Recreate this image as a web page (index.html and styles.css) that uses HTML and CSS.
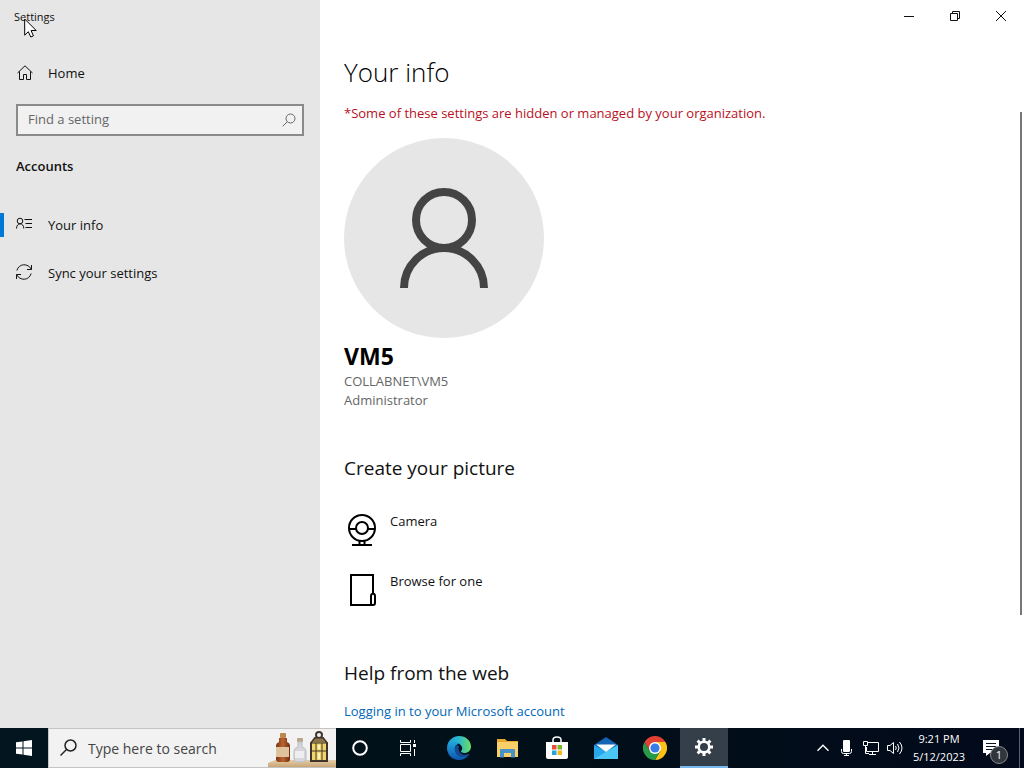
FILE: index.html
```html
<!DOCTYPE html>
<html lang="en">
<head>
	<title>Settings</title>
	<meta charset="utf-8">
	<meta name="viewport" content="width=device-width, initial-scale=1.0">
	<link rel="stylesheet" href="styles.css">
</head>
<body>

<div class="window">
	<aside class="sidebar">
		<div class="app-title">Settings</div>
		<a class="nav-item home" href="#home">
			<svg width="18" height="18" viewBox="0 0 18 18"><path d="M1.500 9 9 1.800 16.500 9M3.500 7.500V15.500H7.500V10.500H10.500V15.500H14.500V7.500"/></svg>
			Home
		</a>
		<label class="find">
			<input type="text" placeholder="Find a setting" aria-label="Find a setting">
			<svg width="14" height="14" viewBox="0 0 14 14"><circle cx="8.500" cy="5.500" r="4.500"/><path d="M5.200 8.800.7 13.300"/></svg>
		</label>
		<h2 class="group">Accounts</h2>
		<nav class="menu">
			<a class="nav-item active" href="#info">
				<svg width="18" height="18" viewBox="0 0 18 18"><circle cx="4" cy="5" r="2.800"/><path d="M.5 12.500C.5 6.300 7.800 6.300 7.800 12.500M8.500 3.500H16M9.500 7.500H16M9.500 11.500H16"/></svg>
				Your info
			</a>
			<a class="nav-item" href="#sync">
				<svg width="18" height="18" viewBox="0 0 18 18"><path d="M.8 6.500C3-.8 12-1 15.300 5.200M15.500 1V5.500H11M15.200 9.500C13 16.800 4 17 .7 10.800M.5 15V10.500H5"/></svg>
				Sync your settings
			</a>
		</nav>
	</aside>

	<main class="main">
		<div class="controls">
			<button type="button" aria-label="Minimize"><svg width="10" height="10" viewBox="0 0 10 10"><path d="M0 5.500H10"/></svg></button>
			<button type="button" aria-label="Restore"><svg width="10" height="10" viewBox="0 0 10 10"><path d="M.5 2.500H7.500V9.500H.5ZM2.500 2.500V.5H9.500V7.500H7.500"/></svg></button>
			<button type="button" aria-label="Close"><svg width="10" height="10" viewBox="0 0 10 10"><path d="M0 0 10 10M10 0 0 10"/></svg></button>
		</div>
		<div class="content">
			<h1>Your info</h1>
			<p class="warning">*Some of these settings are hidden or managed by your organization.</p>
			<svg class="avatar" width="200" height="200" viewBox="0 0 200 200">
				<circle cx="100" cy="100" r="100" fill="#e6e6e6"/>
				<g fill="none" stroke="#444" stroke-width="8"><circle cx="100" cy="82" r="28"/><path d="M60 150A40 40 0 0 1 140 150"/></g>
			</svg>
			<p class="name">VM5</p>
			<p class="detail">COLLABNET\VM5</p>
			<p class="detail">Administrator</p>

			<h2>Create your picture</h2>
			<div class="sources">
				<button type="button">
					<svg width="36" height="36" viewBox="0 0 36 36"><circle cx="18" cy="15" r="13"/><circle cx="18" cy="15" r="6"/><path d="M5 16H12M24 16H31M15.500 28V31M20.500 28V31M8 32H28"/></svg>
					Camera
				</button>
				<button type="button">
					<svg width="36" height="36" viewBox="0 0 36 36"><path d="M27 32H7V2H29V21M27 32V23Q27 21 29 20.500 31 21 31 23V30Q31 32 29 32H27"/></svg>
					Browse for one
				</button>
			</div>

			<h2>Help from the web</h2>
			<a class="help" href="#help">Logging in to your Microsoft account</a>
		</div>
		<div class="scrollbar"></div>
	</main>
</div>

<footer class="taskbar">
	<button class="task" type="button" aria-label="Start">
		<svg width="16" height="16" viewBox="0 0 16 16" fill="#fff"><path d="M0 2.300 6.500 1.400V7.500H0ZM7.500 1.200 16 0V7.500H7.500ZM0 8.500H6.500V14.600L0 13.700ZM7.500 8.500H16V16L7.500 14.800Z"/></svg>
	</button>
	<label class="search">
		<svg width="18" height="18" viewBox="0 0 18 18"><circle cx="10.500" cy="6.500" r="5.500"/><path d="M6.500 10.500.5 16.500"/></svg>
		<input type="text" placeholder="Type here to search" aria-label="Type here to search">
		<svg class="bottles" width="69" height="38" viewBox="0 0 69 38">
			<defs>
				<linearGradient id="amber"><stop offset="0" stop-color="#7b3517"/><stop offset=".5" stop-color="#b9652f"/><stop offset="1" stop-color="#6e2c12"/></linearGradient>
				<linearGradient id="shelf" x2="0" y2="1"><stop offset="0" stop-color="#e5cda8"/><stop offset="1" stop-color="#c9a576"/></linearGradient>
			</defs>
			<path d="M1 38V34L8 31H69V38Z" fill="url(#shelf)"/>
			<rect x="13" y="4" width="6" height="5" rx="1" fill="#bd8650"/>
			<path d="M12 9H20V13Q23 14 23 17V30Q23 33 20 33H12Q9 33 9 30V17Q9 14 12 13Z" fill="url(#amber)"/>
			<rect x="9" y="18" width="13" height="10" fill="#dfc39c"/>
			<rect x="30" y="9" width="6" height="4" rx="1" fill="#b8a58c"/>
			<path d="M31 13H35V18Q39 19 39 22V30Q39 33 36 33H30Q27 33 27 30V22Q27 19 31 18Z" fill="#d5d5da" stroke="#bcbcc3"/>
			<rect x="28" y="22" width="9" height="7" fill="#eeeef0"/>
			<circle cx="52" cy="6" r="3" fill="none" stroke="#42382f" stroke-width="2"/>
			<path d="M44 14 48 9H56L60 14V32H44Z" fill="#f2d66c" stroke="#40352b" stroke-width="2"/>
			<path d="M45 13.500 48.500 9.500H55.500L59 13.500Z" fill="#8d744b"/>
			<path d="M43 14H61M43 22H61M43 32H61M49 14V32M55 14V32" stroke="#40352b"/>
			<path d="M52 16V20M52 24V30" stroke="#fff6bd" stroke-width="2"/>
		</svg>
	</label>
	<button class="task" type="button" aria-label="Cortana">
		<svg width="18" height="18" viewBox="0 0 18 18"><circle cx="9" cy="9" r="6.800" fill="none" stroke="#fff" stroke-width="2"/></svg>
	</button>
	<button class="task" type="button" aria-label="Task View">
		<svg width="18" height="18" viewBox="0 0 18 18" fill="none" stroke="#fff"><path d="M1.500 1V3.500H11.500V1M1.500 5.500H11.500V12.500H1.500ZM1.500 17V14.500H11.500V17M15.500 1V4M15.500 10V17"/><path d="M14 5H17V8H14Z" fill="#fff" stroke="none"/></svg>
	</button>
	<div class="apps">
		<button class="task" type="button" aria-label="Edge">
			<svg width="24" height="24" viewBox="0 0 24 24">
				<defs>
					<linearGradient id="edge-top"><stop offset="0" stop-color="#209bdc"/><stop offset=".5" stop-color="#29b9cf"/><stop offset="1" stop-color="#70dd5e"/></linearGradient>
					<linearGradient id="edge-low" x2="0" y2="1"><stop offset="0" stop-color="#1fa4dc"/><stop offset="1" stop-color="#0c55ae"/></linearGradient>
				</defs>
				<path d="M0 11C1 4 6 0 12 0C19 0 24 5 24 10.500C24 14.500 21 17 17.500 17C15 17 13.800 16 14 15C15.200 14 15.500 12.500 15 11C13 6 4 5 0 11Z" fill="url(#edge-top)"/>
				<path d="M0 12C1 6 8 5 12 8C9 8 7.500 11 8 14C9 20 16 22 22.500 17.500C20 22 16 24 12 24C5 24 0 18.500 0 12Z" fill="url(#edge-low)"/>
				<path d="M9 9C6 14 9 22 17 21C20 20.500 21.500 19 22.500 17.500C17 21 10 17 12 10Z" fill="#134a91"/>
			</svg>
		</button>
		<button class="task" type="button" aria-label="File Explorer">
			<svg width="24" height="24" viewBox="0 0 24 24"><path d="M1 3H9L11 5H22V21H1Z" fill="#e6a92e"/><path d="M1 6H22V21H1Z" fill="#f8cf68"/><path d="M4 14Q4 13 5 13H18Q19 13 19 14V21.500H15V17H8V21.500H4Z" fill="#4792c6"/></svg>
		</button>
		<button class="task" type="button" aria-label="Microsoft Store">
			<svg width="24" height="24" viewBox="0 0 24 24"><path d="M8 7V4Q8 1 12 1T16 4V7" fill="none" stroke="#fff" stroke-width="1.500"/><path d="M1 6H23V21Q23 23 21 23H3Q1 23 1 21Z" fill="#fff"/><path d="M7 9H11.500V13.500H7Z" fill="#e94d35"/><path d="M12.500 9H17V13.500H12.500Z" fill="#75b928"/><path d="M7 14.500H11.500V19H7Z" fill="#25a3df"/><path d="M12.500 14.500H17V19H12.500Z" fill="#f8b719"/></svg>
		</button>
		<button class="task" type="button" aria-label="Mail">
			<svg width="24" height="24" viewBox="0 0 24 24"><path d="M0 9 12 1 24 9V15H0Z" fill="#1263b5"/><path d="M0 9 12 15.500 24 9V23H0Z" fill="#28a8ea"/><path d="M0 23 24 9V23Z" fill="#4bc7f5"/><path d="M2 8.500H22L12 16Z" fill="#f5fbff"/></svg>
		</button>
		<button class="task" type="button" aria-label="Chrome">
			<svg width="24" height="24" viewBox="0 0 24 24"><path d="M12 12V6H22.400A12 12 0 0 1 12 24L17.200 15Z" fill="#fbc116"/><path d="M1.600 6 6.800 15 12 12 17.200 15 12 24A12 12 0 0 1 1.600 6Z" fill="#289b49"/><path d="M1.600 6 6.800 15 12 12V6H22.400A12 12 0 0 0 1.600 6Z" fill="#e34133"/><circle cx="12" cy="12" r="6" fill="#fff"/><circle cx="12" cy="12" r="4.600" fill="#397ee8"/></svg>
		</button>
		<button class="task current" type="button" aria-label="Settings">
			<svg width="20" height="20" viewBox="0 0 20 20" fill="none" stroke="#fff"><circle cx="10" cy="10" r="5.300" stroke-width="2.600"/><path d="M10 1V4M10 16V19M1 10H4M16 10H19M3.600 3.600 5.800 5.800M14.200 14.200 16.400 16.400M3.600 16.400 5.800 14.200M14.200 5.800 16.400 3.600" stroke-width="3"/></svg>
		</button>
	</div>

	<div class="tray">
		<button type="button" aria-label="Show hidden icons"><svg width="14" height="14" viewBox="0 0 14 14"><path d="M1.500 9.800 7 4.300 12.500 9.800" stroke-width="1.400"/></svg></button>
		<button type="button" aria-label="Microphone"><svg width="16" height="16" viewBox="0 0 16 16"><rect x="4" y="0" width="7" height="12" rx="1" fill="#fff" stroke="none"/><path d="M2.500 9V11.500Q2.500 13.500 4.500 13.500H10.500Q12.500 13.500 12.500 11.500V9M7.500 13V15.500M5 15.500H10"/></svg></button>
		<button type="button" aria-label="Network"><svg width="18" height="16" viewBox="0 0 18 16"><path d="M6 2.500H16.500V11.500H4.500V7M1.500 1.500H5.500V5.500H1.500ZM3.500 5.500V13.500H7M10.500 11.500V14.500M7 14.500H14"/></svg></button>
		<button type="button" aria-label="Volume"><svg width="18" height="16" viewBox="0 0 18 16"><path d="M1.500 5.500H4L7.500 2.500V13.500L4 10.500H1.500ZM9.500 6Q11 8 9.500 10M11.500 4Q14.500 8 11.500 12M13.500 2Q18.500 8 13.500 14"/></svg></button>
		<button class="clock" type="button"><span>9:21 PM</span><span>5/12/2023</span></button>
		<button class="notify" type="button" aria-label="1 notification">
			<svg width="18" height="18" viewBox="0 0 18 18"><path d="M1 1H17V14H8L4 17V14H1Z" fill="#fff" stroke="none"/><path d="M4 4.500H14M4 7.500H14M4 10.500H11" stroke="#071521"/></svg>
			<span class="badge">1</span>
		</button>
		<button class="desktop" type="button" aria-label="Show desktop"></button>
	</div>
</footer>

<svg class="cursor" width="13" height="20" viewBox="0 0 13 20"><path d="M.7 1V17.200L4.300 13.700 6.800 19 9.400 17.900 7.100 12.500H12.200Z" fill="#fff" stroke="#000"/></svg>

</body>
</html>
```

FILE: styles.css
```css
* {
	box-sizing: border-box;
}
body {
	display: flex;
	flex-direction: column;
	height: 100vh;
	margin: 0;
	overflow: hidden;
	font-family: "Open Sans", "Noto Sans", sans-serif;
	font-size: 13px;
	line-height: 20px;
	color: #111;
	background: #fff;
}
h1,
h2,
p {
	margin: 0;
	font-weight: normal;
}
a {
	color: inherit;
	text-decoration: none;
}
button,
input {
	margin: 0;
	padding: 0;
	border: 0;
	font: inherit;
	color: inherit;
	background: none;
}
svg {
	display: block;
	flex: none;
}
.window {
	flex: 1;
	display: grid;
	grid-template-columns: 320px 1fr;
	min-height: 0;
}

/* sidebar */
.sidebar {
	background: #e6e6e6;
}
.sidebar svg {
	fill: none;
	stroke: #111;
}
.app-title {
	height: 32px;
	padding-left: 14px;
	font-size: 11px;
	line-height: 34px;
}
.nav-item {
	display: flex;
	align-items: center;
	gap: 14px;
	height: 48px;
	padding: 0 16px;
}
.home {
	margin-top: 17px;
}
.active {
	background: linear-gradient(#0078d7, #0078d7) left center / 4px 24px no-repeat;
}
.find {
	display: flex;
	align-items: center;
	height: 32px;
	margin: 7px 16px 0;
	padding: 0 6px 0 10px;
	border: 2px solid #8a8a8a;
	background: #f1f1f1;
}
.find input,
.search input {
	flex: 1;
	min-width: 0;
	outline: 0;
}
.find input {
	padding-bottom: 2px;
}
.find input::placeholder {
	color: #666;
	opacity: 1;
}
.find svg {
	stroke: #666;
}
.group {
	margin: 20px 16px 25px;
	font-size: 13px;
	font-weight: 600;
}

/* content */
.main {
	position: relative;
	min-width: 0;
	overflow: hidden;
}
.controls {
	display: flex;
	justify-content: flex-end;
	height: 32px;
}
.controls button {
	display: grid;
	place-items: center;
	width: 46px;
}
.controls svg {
	fill: none;
	stroke: #111;
}
.content {
	padding: 22px 24px 0;
}
h1 {
	font-size: 26px;
	font-weight: 300;
	line-height: 36px;
	color: #000;
}
.warning {
	margin: 13px 0 15px;
	color: #b90f1e;
}
.name {
	margin: 6px 0 4px;
	font-size: 23px;
	font-weight: bold;
	line-height: 24px;
	color: #000;
}
.detail {
	line-height: 19px;
	color: #666;
}
.content h2 {
	margin-top: 44px;
	font-size: 19px;
	line-height: 28px;
}
.sources {
	display: flex;
	flex-direction: column;
	align-items: flex-start;
	gap: 24px;
	margin-top: 31px;
}
.sources button {
	display: flex;
	align-items: flex-start;
	gap: 10px;
	line-height: 16px;
}
.sources svg {
	fill: none;
	stroke: #000;
	stroke-width: 2;
}
.sources + h2 {
	margin-top: 50px;
}
.help {
	display: block;
	margin-top: 14px;
	color: #0067b8;
}
.scrollbar {
	position: absolute;
	top: 112px;
	right: 2px;
	bottom: 113px;
	width: 2px;
	background: #777;
}

/* taskbar */
.taskbar {
	display: flex;
	height: 40px;
	color: #fff;
	background: linear-gradient(90deg, #02161f, #010f18 50%, #020a1b);
}
.task {
	display: grid;
	place-items: center;
	width: 48px;
	height: 40px;
}
.search {
	display: flex;
	align-items: center;
	width: 288px;
	padding-left: 11px;
	border: 1px solid #c3c3c3;
	border-right: 0;
	background: #f2f2f2;
}
.search > svg:first-child {
	fill: none;
	stroke: #222;
	stroke-width: 1.5;
}
.search input {
	margin-left: 10px;
	padding-top: 2px;
	font-size: 14px;
}
.search input::placeholder {
	color: #444;
	opacity: 1;
}
.apps {
	display: flex;
	gap: 1px;
	margin-left: 3px;
}
.current {
	background: #353f49;
	border-bottom: 2px solid #76b9ed;
}
.tray {
	display: flex;
	margin-left: auto;
}
.tray button {
	display: grid;
	place-items: center;
	width: 24px;
}
.tray svg {
	fill: none;
	stroke: #fff;
}
.tray .clock {
	width: 64px;
	padding: 2px 0;
	font-size: 11px;
	line-height: 18px;
}
.tray .notify {
	position: relative;
	width: 48px;
	padding-right: 8px;
}
.badge {
	position: absolute;
	right: 11px;
	bottom: 4px;
	width: 18px;
	height: 18px;
	border: 1px solid #85898d;
	border-radius: 50%;
	font-size: 11px;
	line-height: 16px;
	background: #30363c;
}
.tray .desktop {
	width: 5px;
	border-left: 1px solid #59606b;
}

.cursor {
	position: absolute;
	left: 24px;
	top: 18px;
}
```
